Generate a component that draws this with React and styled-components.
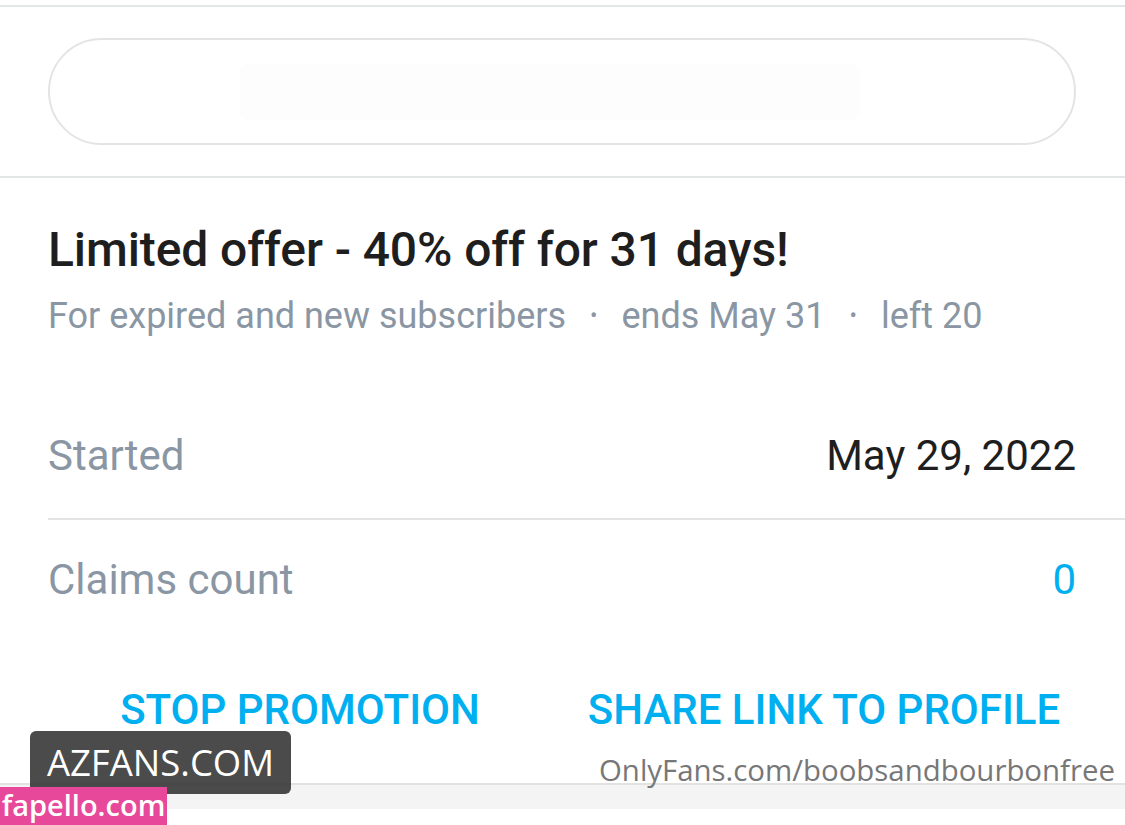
import React from 'react';
import styled, { createGlobalStyle } from 'styled-components';

const GlobalStyle = createGlobalStyle`
  html, body {
    margin: 0;
    padding: 0;
    background: #ffffff;
  }
  body {
    font-family: Roboto, 'Liberation Sans', sans-serif;
  }
`;

const Page = styled.div`
  position: relative;
  width: 1125px;
  height: 825px;
  overflow: hidden;
  background: #ffffff;
`;

const Header = styled.div`
  margin-top: 5px;
  border-top: 2px solid #e3e6e6;
  border-bottom: 2px solid #e3e6e6;
  padding: 31px 49px 31px 48px;
`;

const SearchPill = styled.div`
  height: 103px;
  border: 2px solid #e3e5e5;
  border-radius: 54px;
  display: flex;
  align-items: center;
  justify-content: center;
`;

const Ghost = styled.div`
  width: 620px;
  height: 56px;
  margin-right: 25px;
  border-radius: 8px;
  background: #fdfdfd;
`;

const Offer = styled.section`
  padding: 0 49px 0 48px;
`;

const Title = styled.h2`
  margin: 42px 0 0;
  font-size: 48px;
  line-height: 60px;
  font-weight: 500;
  color: #1e1e1e;
  letter-spacing: -0.1px;
`;

const Meta = styled.div`
  margin-top: 13px;
  display: flex;
  align-items: center;
  font-size: 36px;
  line-height: 46px;
  color: #8a96a3;
`;

const Dot = styled.span`
  margin: 0 24px;
  font-size: 22px;
`;

const Rows = styled.div`
  margin-top: 57px;
  margin-right: -49px;
`;

const InfoRow = styled.div`
  box-sizing: border-box;
  display: flex;
  justify-content: space-between;
  align-items: center;
  height: 124px;
  padding: 0 49px 4px 0;
  border-bottom: 2px solid ${(p) => (p.$divider ? '#e4e4e4' : 'transparent')};
`;

const Label = styled.span`
  font-size: 42px;
  color: #8a96a3;
`;

const Value = styled.span`
  font-size: 42px;
  color: ${(p) => (p.$accent ? '#00aff0' : '#1e1e1e')};
`;

const Actions = styled.div`
  display: flex;
  gap: 20px;
  margin-top: 34px;
`;

const ActionButton = styled.button`
  flex: 1;
  background: none;
  border: none;
  padding: 0;
  font-family: Roboto, 'Liberation Sans', sans-serif;
  font-size: 42px;
  font-weight: 500;
  color: #00aff0;
  text-transform: uppercase;
  line-height: 64px;
  cursor: pointer;
`;

const Footer = styled.div`
  margin-top: 41px;
  border-top: 2px solid #e2e2e0;
  height: 24px;
  background: #f4f4f4;
`;

const DarkTag = styled.div`
  position: absolute;
  left: 30px;
  top: 731px;
  width: 261px;
  height: 63px;
  border-radius: 6px;
  background: rgba(50, 50, 50, 0.88);
  color: #ffffff;
  font-family: 'Open Sans', sans-serif;
  font-size: 36.5px;
  line-height: 63px;
  text-align: center;
`;

const PinkTag = styled.div`
  position: absolute;
  left: 0;
  top: 787px;
  width: 167px;
  height: 38px;
  background: #e8489a;
  color: #ffffff;
  font-family: 'Open Sans', sans-serif;
  font-weight: 600;
  font-size: 29px;
  line-height: 36px;
  text-align: center;
`;

const SourceText = styled.div`
  position: absolute;
  right: 10px;
  top: 751px;
  font-family: 'Open Sans', sans-serif;
  font-size: 29.4px;
  line-height: 38px;
  color: #777777;
`;

const App = () => {
  return (
    <Page>
      <GlobalStyle />
      <Header>
        <SearchPill>
          <Ghost />
        </SearchPill>
      </Header>
      <Offer>
        <Title>Limited offer - 40% off for 31 days!</Title>
        <Meta>
          <span>For expired and new subscribers</span>
          <Dot>•</Dot>
          <span>ends May 31</span>
          <Dot>•</Dot>
          <span>left 20</span>
        </Meta>
        <Rows>
          <InfoRow $divider>
            <Label>Started</Label>
            <Value>May 29, 2022</Value>
          </InfoRow>
          <InfoRow>
            <Label>Claims count</Label>
            <Value $accent>0</Value>
          </InfoRow>
        </Rows>
        <Actions>
          <ActionButton>Stop promotion</ActionButton>
          <ActionButton>Share link to profile</ActionButton>
        </Actions>
      </Offer>
      <Footer />
      <DarkTag>AZFANS.COM</DarkTag>
      <SourceText>OnlyFans.com/boobsandbourbonfree</SourceText>
      <PinkTag>fapello.com</PinkTag>
    </Page>
  );
};

export default App;
